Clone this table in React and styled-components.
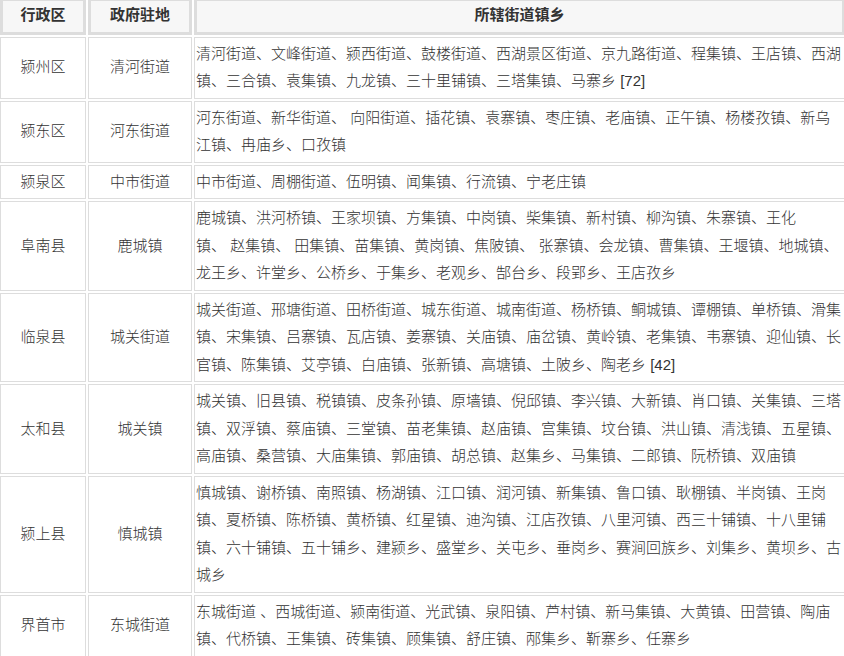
import React from 'react';
import styled, { createGlobalStyle } from 'styled-components';

const NB = '\u00a0';

const rows = [
  {
    area: '颍州区',
    seat: '清河街道',
    towns: '清河街道、文峰街道、颍西街道、鼓楼街道、西湖景区街道、京九路街道、程集镇、王店镇、西湖镇、三合镇、袁集镇、九龙镇、三十里铺镇、三塔集镇、马寨乡 [72]',
  },
  {
    area: '颍东区',
    seat: '河东街道',
    towns: '河东街道、新华街道、 向阳街道、插花镇、袁寨镇、枣庄镇、老庙镇、正午镇、杨楼孜镇、新乌江镇、冉庙乡、口孜镇',
  },
  {
    area: '颍泉区',
    seat: '中市街道',
    towns: '中市街道、周棚街道、伍明镇、闻集镇、行流镇、宁老庄镇',
  },
  {
    area: '阜南县',
    seat: '鹿城镇',
    towns: `鹿城镇、洪河桥镇、王家坝镇、方集镇、中岗镇、柴集镇、新村镇、柳沟镇、朱寨镇、王化镇、${NB}赵集镇、${NB}田集镇、苗集镇、黄岗镇、焦陂镇、${NB}张寨镇、会龙镇、曹集镇、王堰镇、地城镇、龙王乡、许堂乡、公桥乡、于集乡、老观乡、郜台乡、段郢乡、王店孜乡`,
  },
  {
    area: '临泉县',
    seat: '城关街道',
    towns: '城关街道、邢塘街道、田桥街道、城东街道、城南街道、杨桥镇、鲖城镇、谭棚镇、单桥镇、滑集镇、宋集镇、吕寨镇、瓦店镇、姜寨镇、关庙镇、庙岔镇、黄岭镇、老集镇、韦寨镇、迎仙镇、长官镇、陈集镇、艾亭镇、白庙镇、张新镇、高塘镇、土陂乡、陶老乡 [42]',
  },
  {
    area: '太和县',
    seat: '城关镇',
    towns: '城关镇、旧县镇、税镇镇、皮条孙镇、原墙镇、倪邱镇、李兴镇、大新镇、肖口镇、关集镇、三塔镇、双浮镇、蔡庙镇、三堂镇、苗老集镇、赵庙镇、宫集镇、坟台镇、洪山镇、清浅镇、五星镇、高庙镇、桑营镇、大庙集镇、郭庙镇、胡总镇、赵集乡、马集镇、二郎镇、阮桥镇、双庙镇',
  },
  {
    area: '颍上县',
    seat: '慎城镇',
    towns: '慎城镇、谢桥镇、南照镇、杨湖镇、江口镇、润河镇、新集镇、鲁口镇、耿棚镇、半岗镇、王岗镇、夏桥镇、陈桥镇、黄桥镇、红星镇、迪沟镇、江店孜镇、八里河镇、西三十铺镇、十八里铺镇、六十铺镇、五十铺乡、建颍乡、盛堂乡、关屯乡、垂岗乡、赛涧回族乡、刘集乡、黄坝乡、古城乡',
  },
  {
    area: '界首市',
    seat: '东城街道',
    towns: '东城街道 、西城街道、颍南街道、光武镇、泉阳镇、芦村镇、新马集镇、大黄镇、田营镇、陶庙镇、代桥镇、王集镇、砖集镇、顾集镇、舒庄镇、邴集乡、靳寨乡、任寨乡',
  },
];

const GlobalStyle = createGlobalStyle`
  html, body {
    margin: 0;
    padding: 0;
    background: #ffffff;
    overflow: hidden;
  }
`;

const Page = styled.div`
  width: 844px;
  height: 656px;
  overflow: hidden;
`;

const Table = styled.table`
  table-layout: fixed;
  width: 849px;
  margin: -4px 0 0 -2px;
  border-collapse: separate;
  border-spacing: 2px;
  font-family: "Liberation Sans", "Noto Sans CJK SC", sans-serif;
  font-size: 15px;
  color: #333333;
`;

const Th = styled.th`
  box-sizing: border-box;
  width: ${p => p.$w}px;
  padding: 0 3px 3px;
  line-height: 27.5px;
  background: #f7f7f7;
  border: 3px solid #dddddd;
  font-weight: bold;
  text-align: center;
  color: #333333;
`;

const Td = styled.td`
  box-sizing: border-box;
  padding: 2px 3px 3px ${p => (p.$wrap ? 1 : 3)}px;
  line-height: 27.5px;
  border: 1px solid #dddddd;
  font-weight: 300;
  text-align: ${p => (p.$wrap ? 'left' : 'center')};
  vertical-align: middle;
  word-break: normal;
`;

export default function App() {
  return (
    <Page>
      <GlobalStyle />
      <Table>
        <thead>
          <tr>
            <Th $w={86}>行政区</Th>
            <Th $w={104}>政府驻地</Th>
            <Th $w={651}>所辖街道镇乡</Th>
          </tr>
        </thead>
        <tbody>
          {rows.map(r => (
            <tr key={r.area}>
              <Td>{r.area}</Td>
              <Td>{r.seat}</Td>
              <Td $wrap>{r.towns}</Td>
            </tr>
          ))}
        </tbody>
      </Table>
    </Page>
  );
}
